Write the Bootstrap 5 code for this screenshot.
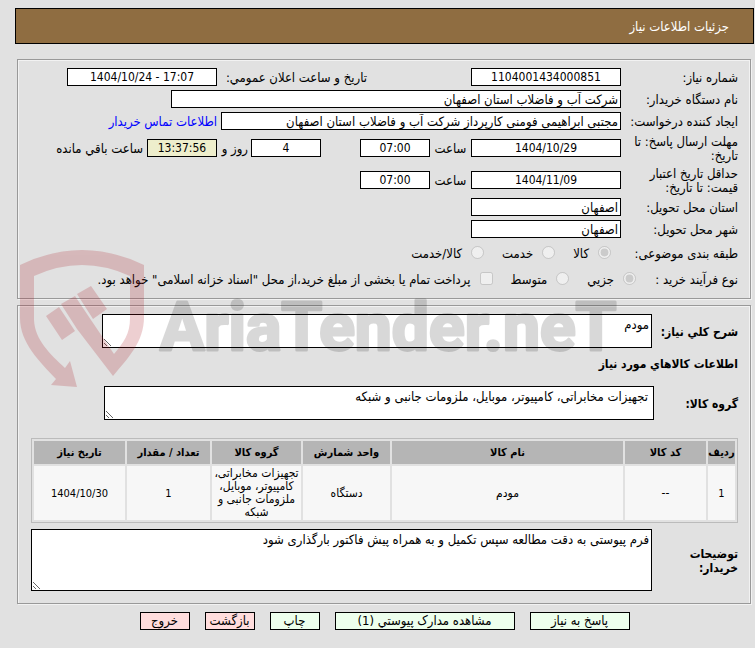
<!DOCTYPE html>
<html lang="fa" dir="rtl">
<head>
<meta charset="utf-8">
<meta name="viewport" content="width=device-width, initial-scale=1">
<title>جزئیات اطلاعات نیاز</title>
<link href="https://cdn.jsdelivr.net/npm/bootstrap@5.3.0/dist/css/bootstrap.min.css" rel="stylesheet">
<style>
body{background:#e1e1e1;color:#000;font:13px/14px "DejaVu Sans Condensed","DejaVu Sans",sans-serif}
.page-title{background:#8f6d41;border:1px solid #000;color:#fff;min-height:36px;padding:2px 24px 0;margin:8px 1px 15px 15px;font-size:13px;font-weight:400}
.panel{border:1px solid #999;box-shadow:inset -1px 1px #f2f2f2,inset 1px 0 #f2f2f2,1px 1px #f2f2f2;margin:0 4px 6px 17px;padding:6px 12px 6px 13px}
.line{min-height:22px;display:flex;align-items:center}
.line.tall{min-height:32px}
.line.opts{min-height:26px}
.cap{flex:0 0 117px;padding-top:2px}
.cap.short{flex-basis:102px}
.cap-b{flex:0 0 86px;font-size:12px;font-weight:700;padding-top:2px}
.box,.area,.act{border:1px solid #000;border-radius:0;color:#000;background:#fff}
.box{height:18px;padding:0 2px;flex-shrink:0}
.num{font-size:12px;text-align:center}
.w-xs{width:70px}.w-sm{width:150px}.w-md{width:400px}.w-lg{width:450px}
.apart{margin-inline-start:104px;width:150px;padding-top:2px}
.later{margin-inline-start:39px}
.mid,.mid-s{padding-top:2px}
.mid{flex:0 0 41px;text-align:center}
.mid-s{flex:0 0 34px;padding-inline-start:3px}
.after{margin-inline-start:4px;padding-top:2px}
.buyer{color:#00f;text-decoration:none}
.buyer:hover{text-decoration:underline}
.left-time{background:#eec}
.opt{display:flex;align-items:center;gap:9px;margin-inline-end:18px;padding-top:2px}
.opt input{width:13px;height:13px;margin:0 0 4px}
.first{margin-inline-start:10px}
.area{padding:2px;line-height:15px;display:block}
.area.two{width:550px;height:34px}
.area.four{height:62px}
.area.sub{padding-inline-start:5px;margin-inline-start:-2px}
.sub-title{font-size:12px;line-height:14px;font-weight:700;margin:0;padding:9px 0 15px}
.items{border:1px solid #bbb;border-collapse:separate;border-spacing:2px;width:100%;table-layout:fixed;font-size:12px;line-height:13px;text-align:center;margin:18px 0 6px}
.items th{background:#b5b5b5;height:23px;padding:0;font-size:11px}
.items td{background:#f7f7f7;height:54px;padding:0}
.items .digits{font-size:11px}
.c1{width:27px}.c2{width:81px}.c4{width:87px}.c5{width:89px}.c6{width:83px}.c7{width:91px}
.act{height:18px;padding:0;line-height:16px;background:#edffed}
.act.back{background:#fdd}
.act-s{width:50px}.act-m{width:100px}.act-l{width:180px}
.actions{gap:15px;padding-top:2px;margin-left:14px}
.stamp{position:absolute;left:15px;top:245px;width:620px;height:150px;pointer-events:none}
.stamp text{font:700 66px Roboto,sans-serif}
</style>
</head>
<body>
<main class="position-relative overflow-hidden">
<h1 class="page-title d-flex align-items-center">جزئیات اطلاعات نیاز</h1>

<section class="panel">
<div class="line"><label class="cap" for="no">شماره نیاز:</label><input id="no" class="box w-sm num" value="1104001434000851"><label class="apart" for="pub">تاریخ و ساعت اعلان عمومي:</label><input id="pub" class="box w-sm num" dir="ltr" value="1404/10/24 - 17:07"></div>
<div class="line"><label class="cap" for="org">نام دستگاه خریدار:</label><input id="org" class="box w-lg" value="شرکت آب و فاضلاب استان اصفهان"></div>
<div class="line"><label class="cap" for="who">ایجاد کننده درخواست:</label><input id="who" class="box w-md" value="مجتبی ابراهیمی فومنی کارپرداز شرکت آب و فاضلاب استان اصفهان"><a class="buyer after" href="#">اطلاعات تماس خریدار</a></div>
<div class="line tall"><label class="cap" for="due">مهلت ارسال پاسخ: تا<br>تاریخ:</label><input id="due" class="box w-sm num" value="1404/10/29"><label class="mid" for="dueh">ساعت</label><input id="dueh" class="box w-xs num" value="07:00"><input id="days" class="box w-xs num later" value="4"><label class="mid-s" for="days">روز و</label><input id="left" class="box w-xs num left-time" value="13:37:56"><label class="after" for="left">ساعت باقي مانده</label></div>
<div class="line tall"><label class="cap" for="val">حداقل تاریخ اعتبار<br>قیمت: تا تاریخ:</label><input id="val" class="box w-sm num" value="1404/11/09"><label class="mid" for="valh">ساعت</label><input id="valh" class="box w-xs num" value="07:00"></div>
<div class="line"><label class="cap" for="prov">استان محل تحویل:</label><input id="prov" class="box w-sm" value="اصفهان"></div>
<div class="line"><label class="cap" for="city">شهر محل تحویل:</label><input id="city" class="box w-sm" value="اصفهان"></div>
<div class="line opts"><span class="cap">طبقه بندی موضوعی:</span><label class="opt first"><input type="radio" name="kind" checked disabled>کالا</label><label class="opt"><input type="radio" name="kind" disabled>خدمت</label><label class="opt"><input type="radio" name="kind" disabled>کالا/خدمت</label></div>
<div class="line opts"><span class="cap short">نوع فرآیند خرید :</span><label class="opt"><input type="radio" name="proc" checked disabled>جزیي</label><label class="opt"><input type="radio" name="proc" disabled>متوسط</label><label class="opt text-nowrap me-0"><input type="checkbox" disabled>پرداخت تمام یا بخشی از مبلغ خرید،از محل "اسناد خزانه اسلامی" خواهد بود.</label></div>
</section>

<section class="panel pt-2 pb-2">
<div class="d-flex align-items-center"><label class="cap-b" for="desc">شرح کلي نیاز:</label><textarea id="desc" class="area two">مودم</textarea></div>
<h2 class="sub-title">اطلاعات کالاهاي مورد نیاز</h2>
<div class="d-flex align-items-center"><label class="cap-b" for="grp">گروه کالا:</label><textarea id="grp" class="area two sub">تجهیزات مخابراتی، کامپیوتر، موبایل، ملزومات جانبی و شبکه</textarea></div>
<table class="items">
<colgroup><col class="c1"><col class="c2"><col><col class="c4"><col class="c5"><col class="c6"><col class="c7"></colgroup>
<thead><tr><th>ردیف</th><th>کد کالا</th><th>نام کالا</th><th>واحد شمارش</th><th>گروه کالا</th><th>تعداد / مقدار</th><th>تاریخ نیاز</th></tr></thead>
<tbody><tr><td class="digits">1</td><td>--</td><td>مودم</td><td>دستگاه</td><td>تجهیزات مخابراتی، کامپیوتر، موبایل، ملزومات جانبی و شبکه</td><td class="digits">1</td><td class="digits">1404/10/30</td></tr></tbody>
</table>
<div class="d-flex align-items-center mb-1"><label class="cap-b" for="note">توضیحات<br>خریدار:</label><textarea id="note" class="area four flex-fill">فرم پیوستی به دقت مطالعه سپس تکمیل و به همراه پیش فاکتور بارگذاری شود</textarea></div>
</section>

<div class="actions d-flex justify-content-center">
<button class="act act-m" type="button">پاسخ به نیاز</button>
<button class="act act-l" type="button">مشاهده مدارک پیوستي (1)</button>
<button class="act act-s" type="button">چاپ</button>
<button class="act act-s back" type="button">بازگشت</button>
<button class="act act-s back" type="button">خروج</button>
</div>

<svg class="stamp" viewBox="15 245 620 150" direction="ltr" aria-hidden="true">
<g fill="#aa141e" opacity=".2"><path d="M20 265Q82 235 144 265V317C144 342 128 358 113 376L77 329 61 304 75 296 91 320 114 354C124 342 130 334 130 318V276Q82 254 34 276V320C35 340 50 354 65 368L70 361 77 387 51 385 56 379C40 362 20 343 20 318Z"/><path d="M46 316 59 307 75 331 62 340ZM77 294 91 286 107 309 93 319Z"/></g>
<g opacity=".15"><text x="160" y="350" stroke="#000" stroke-width="3" stroke-linejoin="round">AriaTender.neT</text></g>
</svg>
</main>
<script src="https://cdn.jsdelivr.net/npm/bootstrap@5.3.0/dist/js/bootstrap.bundle.min.js"></script>
</body>
</html>
